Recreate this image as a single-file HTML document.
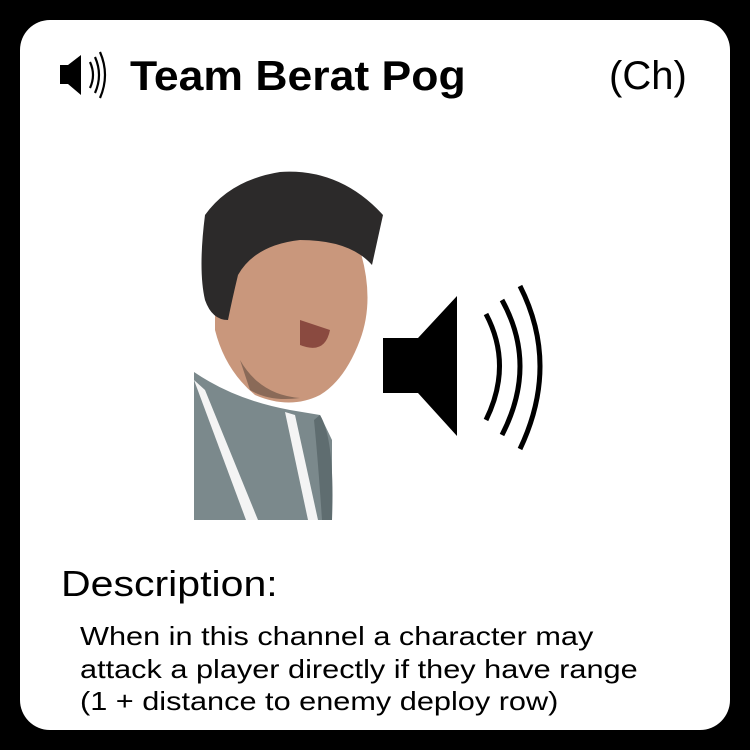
<!DOCTYPE html>
<html><head><style>
body{margin:0;width:750px;height:750px;background:#000;overflow:hidden;font-family:"Liberation Sans",sans-serif;}
.card{position:absolute;left:20px;top:20px;width:710px;height:710px;background:#fff;border-radius:30px;}
.t{position:absolute;color:#000;white-space:nowrap;transform-origin:0 0;}
</style></head><body>
<div class="card"></div>
<svg width="750" height="750" style="position:absolute;left:0;top:0">
 <path d="M60 65 H68 L81 55 V95 L68 84 H60 Z" fill="#000"/>
 <g fill="none" stroke="#000" stroke-width="2.2">
  <path d="M90 62 Q96 75 90 88"/>
  <path d="M95 57 Q103 75 95 93"/>
  <path d="M100 52 Q110 75 100 98"/>
 </g>
 <path d="M383 338 H418 L457 296 V436 L418 393 H383 Z" fill="#000"/>
 <g fill="none" stroke="#000" stroke-width="5">
  <path d="M486 314 Q513 365 486 420"/>
  <path d="M502 300 Q538 365 502 435"/>
  <path d="M520 286 Q560 365 520 449"/>
 </g>
 <path d="M194 372 Q235 400 290 410 L320 415 L332 440 L332 520 L194 520 Z" fill="#7b898c"/>
 <path d="M215 300 Q210 260 240 240 Q300 225 360 250 Q375 300 360 340 Q345 380 320 395 Q290 410 255 395 Q225 370 215 330 Z" fill="#c9977c"/>
 <path d="M300 320 Q315 325 330 330 Q325 355 300 345 Z" fill="#8a4a40"/>
 <path d="M240 360 Q260 395 300 398 Q270 402 250 390 Z" fill="#8a6a58"/>
 <path d="M205 215 Q230 180 280 172 Q340 168 383 215 L372 265 Q350 240 300 240 Q255 245 238 275 Q232 300 228 320 Q212 320 205 300 Q198 270 205 215 Z" fill="#2c2a2a"/>
 <path d="M194 380 L205 390 L258 520 L246 520 Z" fill="#f4f4f4"/>
 <path d="M285 412 L295 415 L318 520 L308 520 Z" fill="#f4f4f4"/>
 <path d="M320 415 Q335 440 332 520 L322 520 Q318 460 314 420 Z" fill="#5f6d70"/>
</svg>
<div class="t" style="left:130px;top:52px;font-size:42px;font-weight:bold;transform:scaleX(1.06)">Team Berat Pog</div>
<div class="t" style="left:609px;top:54px;font-size:40px;">(Ch)</div>
<div class="t" style="left:61px;top:563px;font-size:36px;transform:scaleX(1.14)">Description:</div>
<div class="t" style="left:80px;top:620px;font-size:26px;line-height:32.5px;transform:scaleX(1.18)">When in this channel a character may<br>attack a player directly if they have range<br>(1 + distance to enemy deploy row)</div>
</body></html>
